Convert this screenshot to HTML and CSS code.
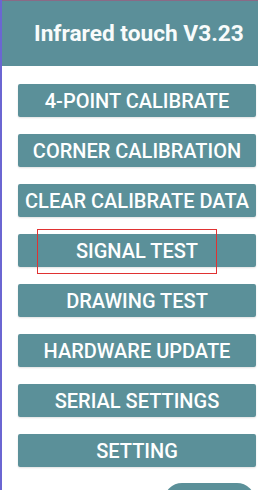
FILE: index.html
```html
<!DOCTYPE html>
<html>
<head>
<meta charset="utf-8">
<link rel="stylesheet" href="styles.css">
</head>
<body>
<div class="app">
  <header class="header"><h1 class="title">Infrared touch V3.23</h1></header>
  <main class="menu">
    <div class="btn">4-POINT CALIBRATE</div>
    <div class="btn">CORNER CALIBRATION</div>
    <div class="btn">CLEAR CALIBRATE DATA</div>
    <div class="btn btn-marked"><span class="mark"></span>SIGNAL TEST</div>
    <div class="btn">DRAWING TEST</div>
    <div class="btn">HARDWARE UPDATE</div>
    <div class="btn">SERIAL SETTINGS</div>
    <div class="btn">SETTING</div>
  </main>
  <div class="footer"><div class="fab"></div></div>
</div>
</body>
</html>
```
FILE: styles.css
```css
html, body {
  margin: 0;
  padding: 0;
  background: #ffffff;
}
body {
  width: 258px;
  height: 490px;
  overflow: hidden;
  font-family: Roboto, "Liberation Sans", sans-serif;
}
.app {
  height: 490px;
  overflow: hidden;
  border-left: 2px solid #6b66d2;
  box-sizing: border-box;
  display: flex;
  flex-direction: column;
}
.header {
  flex-shrink: 0;
  height: 66px;
  background: #5b8f99;
  border-top: 1px solid #8a6a86;
  box-sizing: border-box;
  display: flex;
  align-items: center;
  padding-left: 32px;
}
.title {
  margin: 0;
  color: #f8fbfb;
  font-size: 22.7px;
  font-weight: 700;
  letter-spacing: 0;
}
.menu {
  flex-shrink: 0;
  display: flex;
  flex-direction: column;
  gap: 17px;
  padding: 18px 2px 0 16px;
}
.btn {
  position: relative;
  flex-shrink: 0;
  height: 33px;
  background: #5b9099;
  border-radius: 2px;
  color: #ffffff;
  font-size: 20px;
  font-weight: 500;
  display: flex;
  align-items: center;
  justify-content: center;
  box-shadow: 0 1px 2px rgba(0,0,0,0.12);
}
.mark {
  position: absolute;
  left: 19px;
  top: -5px;
  width: 180px;
  height: 45px;
  border: 1px solid #e03232;
  box-sizing: border-box;
}
.footer {
  flex: 1;
  min-height: 0;
  overflow: hidden;
  display: flex;
  justify-content: flex-end;
  padding: 16px 3px 0 0;
}
.fab {
  flex-shrink: 0;
  width: 91px;
  height: 40px;
  background: #5b9099;
  border-radius: 18px;
}
```
